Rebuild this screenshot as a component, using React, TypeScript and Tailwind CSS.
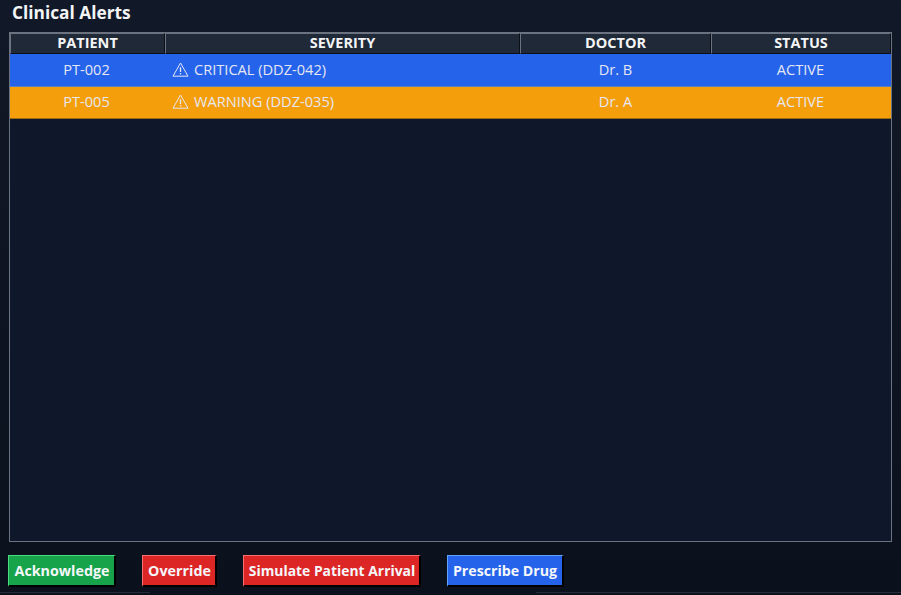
const font = { fontFamily: '"Open Sans", "Noto Sans", sans-serif' };

function Warn() {
  return (
    <svg width="17" height="15" viewBox="0 0 17 15" fill="none" stroke="currentColor" className="shrink-0">
      <path d="M8.5 1 L16 14.2 H1 Z" strokeWidth="1" strokeLinejoin="round" />
      <path d="M8.5 5.2 V10" strokeWidth="1.3" />
      <path d="M8.5 11 V12.4" strokeWidth="1.3" />
    </svg>
  );
}

const cols = ["w-[155px]", "w-[355px]", "w-[191px]", "w-[180px]"];

function Head({ label, className }: { label: string; className: string }) {
  return (
    <div className={`${className} h-[21px] pb-[2px] flex items-center justify-center bg-[#1f2937] border-t border-l border-b border-t-[#6b7280] border-l-[#6b7280] border-b-[#0b0f17] border-r border-r-[#0b0f17] text-[14.5px] font-bold text-[#f3f4f6]`}>
      {label}
    </div>
  );
}

function Row({ bg, id, sev, doc, h, idClass }: { bg: string; id: string; sev: string; doc: string; h: string; idClass: string }) {
  return (
    <div className={`flex ${h} items-center text-[14.6px] text-[#e5e7f2] border-b ${bg}`}>
      <div className={`${cols[0]} text-center pr-[2px]`}>{id}</div>
      <div className={`${cols[1]} flex items-center gap-[5px] pl-[7px]`}>
        <Warn />
        <span>{sev}</span>
      </div>
      <div className={`${cols[2]} text-center`}>{doc}</div>
      <div className={`${cols[3]} text-center pr-[1px]`}>ACTIVE</div>
    </div>
  );
}

function Btn({ label, className }: { label: string; className: string }) {
  return (
    <button className={`${className} h-[32px] flex items-center justify-center font-bold text-[#f5f7fa] border-t border-l border-r-2 border-b-2 border-r-black border-b-black`}>
      {label}
    </button>
  );
}

export default function App() {
  return (
    <div style={font} className="w-[901px] h-[595px] overflow-hidden flex flex-col bg-gradient-to-b from-[#111827] to-[#0b111c]">
      <div className="h-[32px] pl-[12px] flex items-center text-[17.3px] font-bold text-[#f3f4f6] pb-[6px]">Clinical Alerts</div>
      <div className="ml-[9px] w-[883px] h-[510px] border border-[#6b7280] bg-[#0f172a]">
        <div className="flex">
          <Head label="PATIENT" className={cols[0]} />
          <Head label="SEVERITY" className={cols[1]} />
          <Head label="DOCTOR" className={cols[2]} />
          <Head label="STATUS" className={cols[3]} />
        </div>
        <Row idClass="" h="h-[33px] pb-[1px]" bg="bg-[#2563eb] border-b-[#5b7fc4]" id="PT-002" sev="CRITICAL (DDZ-042)" doc="Dr. B" />
        <Row idClass="" h="h-[32px] pb-[1px]" bg="bg-[#f59e0b] border-b-[#9a6a14]" id="PT-005" sev="WARNING (DDZ-035)" doc="Dr. A" />
      </div>
      <div className="flex pl-[8px] pt-[13px] gap-[26px]">
        <Btn label="Acknowledge" className="w-[108px] pl-[1px] text-[14.3px] bg-[#16a34a] border-t-[#4ade80] border-l-[#4ade80]" />
        <Btn label="Override" className="w-[75px] pl-[1px] text-[14.3px] bg-[#dc2626] border-t-[#f87171] border-l-[#f87171]" />
        <Btn label="Simulate Patient Arrival" className="w-[178px] pt-[1px] pl-[1px] text-[13.9px] bg-[#dc2626] border-t-[#f87171] border-l-[#f87171]" />
        <Btn label="Prescribe Drug" className="w-[117px] text-[14.2px] bg-[#2563eb] border-t-[#60a5fa] border-l-[#60a5fa]" />
      </div>
      <div className="mt-[5px] flex h-[1px] justify-between">
        <div className="w-[150px] bg-[#262b35]" />
        <div className="w-[365px] bg-[#262b35]" />
      </div>
    </div>
  );
}
